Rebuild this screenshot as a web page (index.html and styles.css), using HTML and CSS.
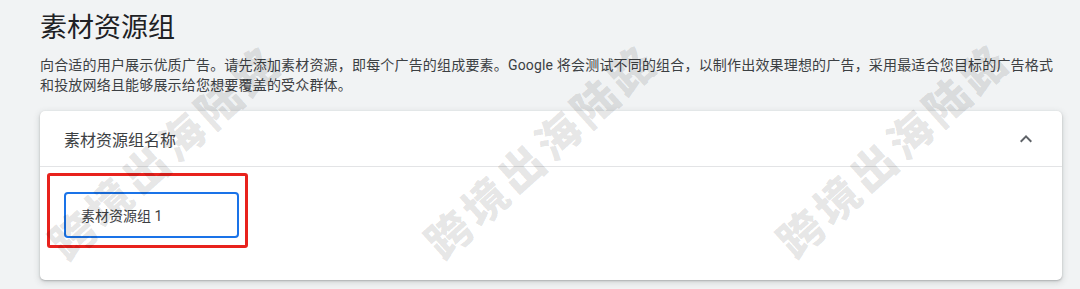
FILE: index.html
```html
<!DOCTYPE HTML>
<html>
<head>
    <meta charset="utf-8">
    <title>素材资源组</title>
    <link rel="stylesheet" href="styles.css">
</head>
<body>
<div class="page">
    <h1 class="title">素材资源组</h1>
    <p class="desc">向合适的用户展示优质广告。请先添加素材资源，即每个广告的组成要素。Google 将会测试不同的组合，以制作出效果理想的广告，采用最适合您目标的广告格式和投放网络且能够展示给您想要覆盖的受众群体。</p>

    <div class="card">
        <div class="card-header">
            <span class="card-title">素材资源组名称</span>
            <svg class="chevron" width="24" height="24" viewBox="0 0 24 24">
                <path d="M12 8l-6 6 1.41 1.41L12 10.83l4.59 4.58L18 14z"/>
            </svg>
        </div>
        <div class="card-body">
            <div class="field">
                <div class="input">素材资源组 1</div>
                <div class="highlight"></div>
            </div>
        </div>
    </div>
</div>

<div class="watermarks">
    <span class="wm wm-1">跨境出海陆路</span>
    <span class="wm wm-2">跨境出海陆路</span>
    <span class="wm wm-3">跨境出海陆路</span>
</div>
</body>
</html>
```

FILE: styles.css
```css
body {
    margin: 0;
    background-color: #f1f3f4;
    font-family: Roboto, "Noto Sans CJK SC", sans-serif;
    color: #3c4043;
    width: 1080px;
    height: 289px;
    overflow: hidden;
    position: relative;
}
.page {
    padding: 10px 18px 0 40px;
}
.title {
    margin: 0;
    font-size: 27px;
    font-weight: 400;
    line-height: 36px;
    color: #202124;
}
.desc {
    margin: 9px 0 0;
    max-width: 1018px;
    font-size: 14px;
    line-height: 20px;
    letter-spacing: 0.18px;
    color: #3c4043;
}
.card {
    margin-top: 16px;
    background-color: #fff;
    border-radius: 5px;
    box-shadow: 0 1px 2px rgba(60, 64, 67, 0.3), 0 2px 6px 1px rgba(60, 64, 67, 0.15);
}
.card-header {
    height: 55px;
    padding: 0 24px;
    display: flex;
    align-items: center;
    justify-content: space-between;
    border-bottom: 1px solid #e3e4e6;
}
.card-title {
    font-size: 16px;
    color: #3c4043;
}
.chevron {
    fill: #5f6368;
}
.card-body {
    padding: 25px 24px 42px;
}
.field {
    position: relative;
    width: 175px;
}
.input {
    box-sizing: border-box;
    height: 46px;
    border: 2px solid #1a73e8;
    border-radius: 4px;
    padding-left: 15px;
    display: flex;
    align-items: center;
    font-size: 14px;
    color: #3c4043;
}
.highlight {
    position: absolute;
    top: -19px;
    left: -17px;
    width: 201px;
    height: 75px;
    box-sizing: border-box;
    border: 3px solid #e8221d;
    border-radius: 3px;
}
.watermarks {
    position: absolute;
    top: 0;
    left: 0;
    right: 0;
    bottom: 0;
    pointer-events: none;
}
.wm {
    position: absolute;
    font-family: "Noto Sans CJK SC", sans-serif;
    font-weight: 900;
    font-size: 44px;
    line-height: 1;
    letter-spacing: 5px;
    white-space: nowrap;
    color: rgba(0, 0, 0, 0.11);
    transform: translate(-50%, -50%) rotate(-42deg);
}
.wm-1 {
    left: 164px;
    top: 150px;
}
.wm-2 {
    left: 540px;
    top: 149px;
}
.wm-3 {
    left: 892px;
    top: 148px;
}
```
